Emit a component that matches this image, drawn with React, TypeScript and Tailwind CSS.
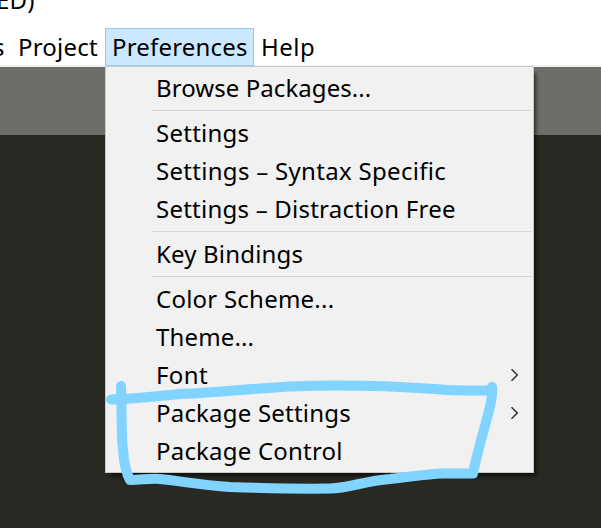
type Entry = { label: string; spacing: string; submenu?: boolean };

const groups: Entry[][] = [
  [{ label: "Browse Packages...", spacing: "tracking-[0.07px]" }],
  [
    { label: "Settings", spacing: "tracking-[0.25px]" },
    { label: "Settings – Syntax Specific", spacing: "tracking-[0.3px]" },
    { label: "Settings – Distraction Free", spacing: "tracking-[0.23px]" },
  ],
  [{ label: "Key Bindings", spacing: "tracking-[0.17px]" }],
  [
    { label: "Color Scheme...", spacing: "tracking-[0.23px]" },
    { label: "Theme...", spacing: "tracking-[0.15px]" },
    { label: "Font", spacing: "tracking-[0.4px]", submenu: true },
    { label: "Package Settings", spacing: "tracking-[0.2px]", submenu: true },
    { label: "Package Control", spacing: "tracking-[0.2px]" },
  ],
];

function MenuItem({ label, spacing, submenu }: Entry) {
  return (
    <div className="flex h-[38px] items-center justify-between pl-[50px] pr-[14px]">
      <span className={spacing}>{label}</span>
      {submenu && (
        <svg className="h-[14px] w-[9px]" viewBox="0 0 9 14" fill="none" stroke="#333" strokeWidth="1.5">
          <path d="M1.5 1.2 7.3 7 1.5 12.8" />
        </svg>
      )}
    </div>
  );
}

function Dropdown() {
  return (
    <div className="absolute left-0 top-[38px] z-10 w-[429px] border border-[#c8c9c8] bg-[#f1f1f1] py-[2px] shadow-[4px_5px_4px_-2px_rgba(0,0,0,0.6)]">
      {groups.map((group, i) => (
        <div key={i}>
          {i > 0 && (
            <div className="flex h-[7px] items-center pl-[46px] pr-[2px]">
              <div className="h-px w-full bg-[#d5d5d5]" />
            </div>
          )}
          {group.map((entry) => (
            <MenuItem key={entry.label} {...entry} />
          ))}
        </div>
      ))}
    </div>
  );
}

export default function App() {
  return (
    <div className="relative flex h-[528px] w-[601px] flex-col overflow-hidden bg-[#282923] font-['Noto_Sans','Open_Sans',sans-serif] text-[24px] leading-[38px] text-black">
      <header className="h-[67px] shrink-0 border-b-2 border-[#f0f1f0] bg-white">
        <div className="-ml-[4px] h-[28px] leading-[0px] tracking-[0.2px] whitespace-nowrap">ED)</div>
        <nav className="flex h-[38px] whitespace-nowrap">
          <span className="-ml-[7px] w-[25px]">s</span>
          <span className="w-[87px] tracking-[0.2px]">Project</span>
          <div className="relative w-[149px]">
            <div className="h-[38px] border border-[#99c9ec] bg-[#cce8ff] pl-[6px] leading-[36px] tracking-[0.18px]">Preferences</div>
            <Dropdown />
          </div>
          <span className="pl-[7px] tracking-[0.5px]">Help</span>
        </nav>
      </header>
      <div className="h-[68px] shrink-0 bg-[#6d6e69]" />
      <svg className="pointer-events-none absolute inset-0 z-20 h-full w-full" viewBox="0 0 601 528" fill="none" stroke="#80d4ff" strokeWidth="10" strokeLinecap="round" strokeLinejoin="round">
        <path d="M111 399.5 C135 399 150 397 180 394 C213 393 235 390 290 386.5 C350 384 405 387 435 389 C455 391 472 390.500 492 390.500" />
        <path d="M121 386 C122 410 121 435 123 450 C124 463 126 473 130 480 C142 480 150 478 160 479 C180 481 200 485 230 487 C260 488 300 489 330 488.500 C350 488 364 481 390 479 C410 477 426 474 443 473.500 L473 473.500 C478 448 487 421 491 402 C492 397 493 392 492 387" />
      </svg>
    </div>
  );
}
